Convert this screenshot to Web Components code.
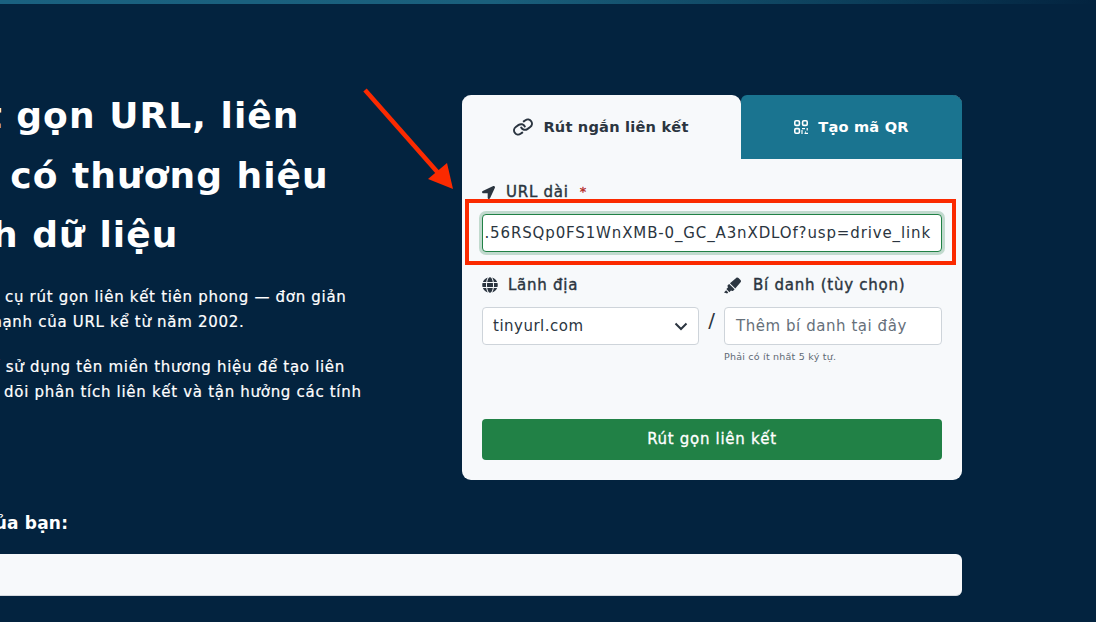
<!DOCTYPE html>
<html lang="vi"><head><meta charset="utf-8"><title>TinyURL</title>
<style>
html,body{margin:0;padding:0;width:1096px;height:622px;overflow:hidden;background:#03233f}
body{font-family:"DejaVu Sans","Noto Sans",sans-serif}
</style></head>
<body>
<x-page>
  <x-hero slot="hero">
    <span slot="title" style="margin-left:5px">Rút gọn URL, liên</span>
    <span slot="title" style="margin-left:4px">kết có thương hiệu</span>
    <span slot="title" style="margin-left:14px">tích dữ liệu</span>
    <p><span style="margin-left:34px">Công cụ rút gọn liên kết tiên phong — đơn giản</span><span style="margin-left:30px">sức mạnh của URL kể từ năm 2002.</span></p>
    <p><span style="margin-left:31px">Và để sử dụng tên miền thương hiệu để tạo liên</span><span style="margin-left:38px">theo dõi phân tích liên kết và tận hưởng các tính</span></p>
  </x-hero>
  <x-shortener slot="card"></x-shortener>
  <x-result slot="result" label="URL của bạn:"></x-result>
</x-page>
<script>
const F='"DejaVu Sans","Noto Sans",sans-serif';
const ICONS={
 arrow:['0 0 512 512','M444.52 3.52L28.74 195.42c-47.97 22.39-31.98 92.75 19.19 92.75h175.91v175.91c0 51.17 70.36 67.17 92.75 19.19l191.9-415.78c15.99-38.39-25.59-79.97-63.97-63.97z'],
 globe:['0 0 496 512','M336.5 160C322 70.7 287.8 8 248 8s-74 62.7-88.5 152h177zM152 256c0 22.2 1.2 43.5 3.3 64h185.3c2.1-20.5 3.3-41.8 3.3-64s-1.2-43.5-3.3-64H155.3c-2.1 20.5-3.3 41.8-3.3 64zm324.7-96c-28.6-67.9-86.5-120.4-158-141.6 24.4 33.8 41.2 84.7 50 141.6h108zM177.2 18.4C105.8 39.6 47.8 92.1 19.3 160h108c8.7-56.9 25.5-107.8 49.9-141.6zM487.4 192H372.7c2.1 21 3.3 42.5 3.3 64s-1.2 43-3.3 64h114.6c5.5-20.5 8.6-41.8 8.6-64s-3.1-43.5-8.5-64zM120 256c0-21.5 1.2-43 3.3-64H8.6C3.2 212.5 0 233.8 0 256s3.2 43.5 8.6 64h114.6c-2-21-3.2-42.5-3.2-64zm39.5 96c14.5 89.3 48.7 152 88.5 152s74-62.7 88.5-152h-177zm159.3 141.6c71.4-21.2 129.4-73.7 158-141.6h-108c-8.8 56.9-25.6 107.8-50 141.6zM19.3 352c28.6 67.9 86.5 120.4 158 141.6-24.4-33.8-41.2-84.7-50-141.6h-108z'],
 pen:['0 0 544 512','M0 479.98L99.92 512l35.45-35.45-67.04-67.04L0 479.98zm124.61-240.01a36.592 36.592 0 0 0-10.79 38.1l13.05 42.83-50.93 50.94 96.23 96.23 50.86-50.86 42.74 13.08c13.73 4.2 28.65-.01 38.15-10.78l35.55-41.64-173.34-173.34-41.52 35.44zm403.31-160.7l-63.2-63.2c-20.49-20.49-53.38-21.52-75.12-2.35L190.55 183.68l169.77 169.78L530.27 154.4c19.18-21.74 18.15-54.63-2.35-75.13z']
};
const svg=(n,s,mr)=>`<svg width="${s}" height="${s}" viewBox="${ICONS[n][0]}" fill="currentColor" aria-hidden="true" style="display:block;flex:none;${mr?`margin-right:${mr}px`:''}"><path d="${ICONS[n][1]}"/></svg>`;
const def=(name,html)=>customElements.define(name,class extends HTMLElement{
  constructor(){super();this.attachShadow({mode:'open'}).innerHTML=typeof html==='function'?html(this):html}
});

def('x-page',`<style>
:host{display:block;width:1096px;height:622px;position:relative;overflow:hidden;background:#03233f}
.strip{height:4px;background:linear-gradient(90deg,#1a6180 0%,#1a5f7c 45%,#0b3c58 80%,#03233f 100%)}
.grid{display:grid;grid-template-columns:538px 500px;margin-left:-76px;padding-top:91px}
.res{grid-column:1/3;padding-top:31px}
.box{position:absolute;left:465px;top:199px;width:491px;height:66px;box-sizing:border-box;border:4.5px solid #fb2a00;pointer-events:none}
.arr{position:absolute;left:0;top:0;pointer-events:none}
</style>
<div class="strip"></div>
<div class="grid"><slot name="hero"></slot><slot name="card"></slot><div class="res"><slot name="result"></slot></div></div>
<div class="box"></div>
<svg class="arr" width="1096" height="622"><line x1="365" y1="90" x2="440" y2="175" stroke="#fb2a00" stroke-width="4.5"/><polygon points="453,189 428,179 447,163" fill="#fb2a00"/></svg>`);

def('x-hero',`<style>
:host{display:block;color:#fff;white-space:nowrap;margin-top:-9px}
.t{display:flex;flex-direction:column}
::slotted([slot=title]){display:block;font:700 36px/59.5px ${F};letter-spacing:1.05px}
.b{padding-top:20px;display:flex;flex-direction:column;gap:20px}
::slotted(p){margin:0;font:400 15px/25px ${F};letter-spacing:.7px;-webkit-text-stroke:.2px #fff;display:flex;flex-direction:column}
</style><div class="t"><slot name="title"></slot></div><div class="b"><slot></slot></div>`);

def('x-shortener',`<style>
:host{display:block;width:500px;height:385px;background:#f7f9fb;border-radius:9px;font-family:${F};box-sizing:border-box;overflow:hidden}
.tabs{display:grid;grid-template-columns:279px 221px;height:64px;background:linear-gradient(#03233f 0 10px,#1a7490 10px)}
.tab{display:flex;align-items:center;justify-content:center;font:700 14.6px/20px ${F};letter-spacing:.2px;white-space:nowrap}
.a{background:#f7f9fb;color:#2b3540;gap:11px;border-radius:0 9px 0 0}
.b{color:#fff;gap:10px;background:#1a7490;border-radius:6px 0 0 0}
.f{padding:22px 20px 0;display:flex;flex-direction:column}
.lb{display:flex;align-items:center;font:400 15px/20px ${F};letter-spacing:.75px;-webkit-text-stroke:.4px #2b3540;color:#2b3540;white-space:nowrap;height:20px;padding-top:1px;margin-bottom:-1px}
.req{color:#b3261e;-webkit-text-stroke:.3px #b3261e;margin-left:11px;font-size:13px;letter-spacing:0}
.in{box-sizing:border-box;height:38px;width:460px;margin-top:13px;padding:0 10px;background:#fff;border:1px solid #218146;border-radius:4px;box-shadow:0 0 0 3px rgba(33,129,70,.25);font:400 15px/36px ${F};letter-spacing:.87px;color:#2b3540;overflow:hidden;white-space:nowrap;display:flex;justify-content:flex-end}
.row{display:grid;grid-template-columns:217px 25px 218px;margin-top:22px}
.col{display:flex;flex-direction:column}
.ctl{box-sizing:border-box;height:38px;margin-top:13px;background:#fff;border:1px solid #ced4da;border-radius:4px;padding:0 10px;font:400 15px/36px ${F};letter-spacing:.5px;color:#2b3540;display:flex;justify-content:space-between;align-items:center;white-space:nowrap}
.ph{color:#66707a;padding-left:11px;letter-spacing:.55px;justify-content:flex-start}
.sl{font:400 20px/24px ${F};color:#2b3540;text-align:center;padding-top:34px}
.help{font:400 9.5px/14px ${F};letter-spacing:.22px;color:#5f6a75;margin-top:5px;white-space:nowrap}
.btn{margin-top:55px;height:41px;border-radius:4px;background:#218146;color:#fff;font:400 15px/41px ${F};letter-spacing:.7px;-webkit-text-stroke:.3px #fff;text-align:center}
</style>
<div class="tabs">
 <div class="tab a"><svg width="20" height="20" viewBox="0 0 24 24" fill="none" stroke="currentColor" stroke-width="2.4" stroke-linecap="round" aria-hidden="true" style="margin:0 -1px;flex:none"><g transform="rotate(10 12 12)"><path d="M10 13a5 5 0 0 0 7.54.54l3-3a5 5 0 0 0-7.07-7.07l-1.72 1.71"/><path d="M14 11a5 5 0 0 0-7.54-.54l-3 3a5 5 0 0 0 7.07 7.07l1.71-1.71"/></g></svg><span>Rút ngắn liên kết</span></div>
 <div class="tab b"><svg width="14" height="14" viewBox="0 0 14 14" fill="none" stroke="currentColor" stroke-width="1.6" aria-hidden="true"><rect x=".8" y=".8" width="4.6" height="4.6" rx="1.2"/><rect x="8.6" y=".8" width="4.6" height="4.6" rx="1.2"/><rect x=".8" y="8.6" width="4.6" height="4.6" rx="1.2"/><path d="M8 8.6h3M13.2 8v2.4M8 10v4M11 12h1M10.5 13.4h3.5" stroke-width="1.2"/></svg><span>Tạo mã QR</span></div>
</div>
<div class="f">
 <div class="lb">${svg('arrow',13,11)}<span>URL dài</span><span class="req">*</span></div>
 <div class="in"><span>.56RSQp0FS1WnXMB-0_GC_A3nXDLOf?usp=drive_link</span></div>
 <div class="row">
  <div class="col"><div class="lb">${svg('globe',16,10)}<span>Lãnh địa</span></div>
   <div class="ctl"><span>tinyurl.com</span><svg width="14" height="9" viewBox="0 0 14 9" fill="none" stroke="#2b3540" stroke-width="2" aria-hidden="true"><path d="M1.5 1.5 7 7l5.5-5.5"/></svg></div></div>
  <div class="sl">/</div>
  <div class="col"><div class="lb">${svg('pen',17,12)}<span>Bí danh (tùy chọn)</span></div>
   <div class="ctl ph">Thêm bí danh tại đây</div>
   <div class="help">Phải có ít nhất 5 ký tự.</div></div>
 </div>
 <div class="btn">Rút gọn liên kết</div>
</div>`);

def('x-result',el=>`<style>
:host{display:block;width:1038px}
.l{font:700 17px/24px ${F};letter-spacing:.2px;color:#fff;white-space:nowrap;padding-left:16px}
.b{margin-top:19px;height:42px;box-sizing:border-box;background:#f7f9fb;border-radius:6px;border-bottom:1px solid #d5d9de}
</style><div class="l">${el.getAttribute('label')}</div><div class="b"></div>`);
</script>
</body></html>
